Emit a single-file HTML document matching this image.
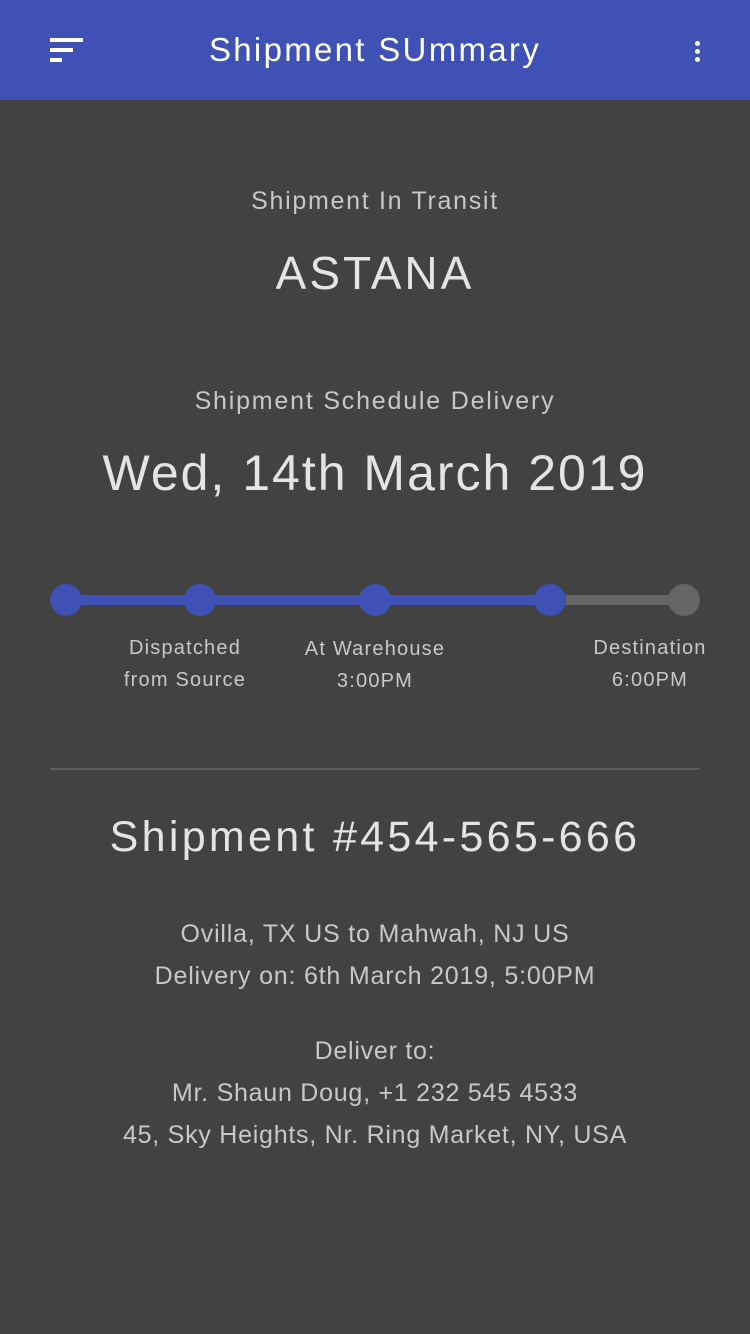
<!DOCTYPE html>
<html><head><meta charset="utf-8"><style>
body{margin:0;width:750px;height:1334px;background:#424242;font-family:"Liberation Sans",sans-serif;position:relative;overflow:hidden}
.hdr{position:absolute;left:0;top:0;width:750px;height:100px;background:#3f51b5}
.t{position:absolute;left:0;width:750px;text-align:center;white-space:nowrap}
.a{position:absolute;text-align:center;white-space:nowrap;color:#c8c8c8;font-size:20px;line-height:32px;letter-spacing:1.2px}
.dot{position:absolute;width:32px;height:32px;border-radius:50%;top:584px}
</style></head><body>
<div class="hdr">
<div style="position:absolute;left:50px;top:38px;width:33px;height:4px;background:#fff"></div>
<div style="position:absolute;left:50px;top:48px;width:23px;height:4px;background:#fff"></div>
<div style="position:absolute;left:50px;top:58px;width:12px;height:4px;background:#fff"></div>
<div class="t" style="top:29px;font-size:33px;color:#fff;line-height:42px;letter-spacing:2.3px">Shipment SUmmary</div>
<div style="position:absolute;left:695px;top:41px;width:5px;height:5px;border-radius:50%;background:#fff;box-shadow:0 8px 0 #fff,0 16px 0 #fff"></div>
</div>
<div class="t" style="top:185px;font-size:25px;color:#c8c8c8;line-height:32px;letter-spacing:1.7px">Shipment In Transit</div>
<div class="t" style="top:245px;font-size:46px;color:#e4e4e4;line-height:56px;letter-spacing:3px">ASTANA</div>
<div class="t" style="top:385px;font-size:25px;color:#c8c8c8;line-height:32px;letter-spacing:1.8px">Shipment Schedule Delivery</div>
<div class="t" style="top:442px;font-size:50px;color:#e4e4e4;line-height:62px;letter-spacing:2px">Wed, 14th March 2019</div>
<div style="position:absolute;left:66px;top:595px;width:484px;height:10px;background:#3f51b5"></div>
<div style="position:absolute;left:550px;top:595px;width:134px;height:10px;background:#666"></div>
<div class="dot" style="left:50px;background:#3f51b5"></div>
<div class="dot" style="left:184px;background:#3f51b5"></div>
<div class="dot" style="left:359px;background:#3f51b5"></div>
<div class="dot" style="left:534px;background:#3f51b5"></div>
<div class="dot" style="left:668px;background:#666"></div>
<div class="a" style="left:95px;width:180px;top:632px">Dispatched<br>from Source</div>
<div class="a" style="left:285px;width:180px;top:633px">At Warehouse<br>3:00PM</div>
<div class="a" style="left:560px;width:180px;top:632px">Destination<br>6:00PM</div>
<div style="position:absolute;left:50px;top:768px;width:650px;height:2px;background:#5e5e5e"></div>
<div class="t" style="top:810px;font-size:43px;color:#e4e4e4;line-height:54px;letter-spacing:3.3px">Shipment #454-565-666</div>
<div class="t" style="top:913px;font-size:25px;color:#c8c8c8;line-height:42px;letter-spacing:0.8px">Ovilla, TX US to Mahwah, NJ US<br>Delivery on: 6th March 2019, 5:00PM</div>
<div class="t" style="top:1030px;font-size:25px;color:#c8c8c8;line-height:42px;letter-spacing:0.75px">Deliver to:<br>Mr. Shaun Doug, +1 232 545 4533<br>45, Sky Heights, Nr. Ring Market, NY, USA</div>
</body></html>
